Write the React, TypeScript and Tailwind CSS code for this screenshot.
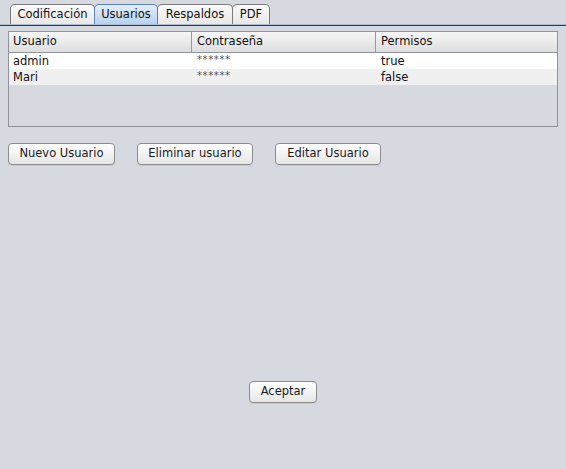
import React from 'react';

const tabs = [
  { label: 'Codificación', w: 'w-[85px]' },
  { label: 'Usuarios', w: 'w-[64px]', active: true },
  { label: 'Respaldos', w: 'w-[76px]' },
  { label: 'PDF', w: 'w-[38px]' },
];

const rows = [
  { user: 'admin', pass: '******', perm: 'true' },
  { user: 'Mari', pass: '******', perm: 'false' },
];

const Btn = ({ label, w }: { label: string; w: string }) => (
  <button
    className={`${w} h-[22px] rounded-[4px] border border-[#8c8c8c] bg-gradient-to-b from-[#ffffff] to-[#e6e6e6] shadow-[0_1px_0_rgba(0,0,0,0.08)] text-[11.5px] text-[#1a1a1a] leading-none`}
  >
    {label}
  </button>
);

export default function App() {
  return (
    <div
      className="w-[566px] h-[469px] bg-[#d6d9df] flex flex-col overflow-hidden"
      style={{ fontFamily: '"Lucida Grande", "DejaVu Sans", sans-serif' }}
    >
      {/* tabs */}
      <div className="flex pl-[10px] pt-[4px] h-[24px]">
        {tabs.map((t) => (
          <div
            key={t.label}
            className={
              t.active
                ? `${t.w} h-[20px] -mr-px flex items-center justify-center rounded-t-[5px] border border-b-0 border-[#5f86b8] bg-gradient-to-b from-[#e3eefa] to-[#b7d2ee] text-[11.5px] text-[#111]`
                : `${t.w} h-[20px] -mr-px flex items-center justify-center rounded-t-[5px] border border-b-0 border-[#7c7c7c] bg-gradient-to-b from-[#fafafa] to-[#e8e8e8] text-[11.5px] text-[#111]`
            }
          >
            {t.label}
          </div>
        ))}
      </div>
      <div className="h-px bg-[#a9bbd3]" />
      <div className="h-px bg-[#2f3a52]" />

      {/* table */}
      <div className="mx-[8px] mt-[5px] h-[96px] border border-[#8e939c] bg-[#d6d9df]">
        <div className="flex h-[21px] border-b border-[#8e939c] bg-gradient-to-b from-[#f6f6f6] to-[#dedede] text-[11.5px] text-[#111]">
          <div className="w-[183px] pl-[4px] border-r border-[#9a9a9a] flex items-center">Usuario</div>
          <div className="w-[184px] pl-[5px] border-r border-[#9a9a9a] flex items-center">Contraseña</div>
          <div className="flex-1 pl-[5px] flex items-center">Permisos</div>
        </div>
        {rows.map((r, i) => (
          <div
            key={r.user}
            className={`flex h-[16px] text-[11.5px] text-[#111] leading-[17px] ${i % 2 === 0 ? 'bg-white' : 'bg-[#f0f0f0]'}`}
          >
            <div className="w-[183px] pl-[4px]">{r.user}</div>
            <div className="w-[184px] pl-[5px] text-[10px] text-[#555] tracking-[0.6px] leading-[14px]">{r.pass}</div>
            <div className="flex-1 pl-[5px]">{r.perm}</div>
          </div>
        ))}
      </div>

      {/* actions */}
      <div className="flex pl-[8px] mt-[16px] gap-[22px]">
        <Btn label="Nuevo Usuario" w="w-[107px]" />
        <Btn label="Eliminar usuario" w="w-[116px]" />
        <Btn label="Editar Usuario" w="w-[106px]" />
      </div>

      <div className="flex justify-center mt-[216px]">
        <Btn label="Aceptar" w="w-[68px]" />
      </div>
    </div>
  );
}
